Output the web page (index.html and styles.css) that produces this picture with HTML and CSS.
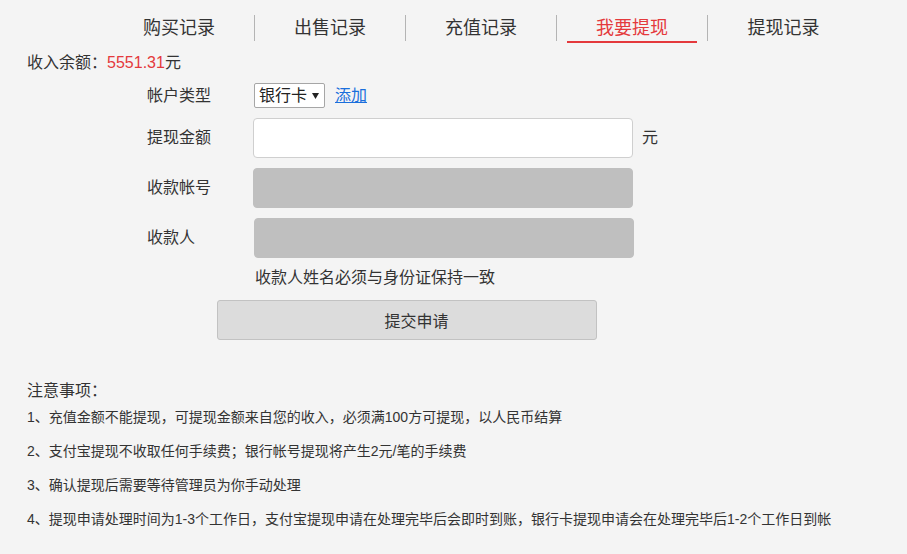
FILE: index.html
```html
<!DOCTYPE html>
<html lang="zh-CN">
<head>
<meta charset="utf-8">
<title>我要提现</title>
<link rel="stylesheet" href="styles.css">
</head>
<body>
<div class="page">
  <nav class="tabs">
    <a class="tab"><span class="tab-label">购买记录</span></a>
    <a class="tab"><span class="tab-label">出售记录</span></a>
    <a class="tab"><span class="tab-label">充值记录</span></a>
    <a class="tab active"><span class="tab-label">我要提现</span></a>
    <a class="tab last"><span class="tab-label">提现记录</span></a>
  </nav>

  <div class="balance">收入余额<span class="punc">：</span><span class="amount">5551.31</span>元</div>

  <form class="form">
    <div class="row">
      <label class="label">帐户类型</label>
      <div class="select" role="combobox">
        <span>银行卡</span>
        <svg class="caret" width="7" height="6" viewBox="0 0 7 6"><path d="M0 0H7L3.5 6Z" fill="#222"/></svg>
      </div>
      <a class="add-link" href="#">添加</a>
    </div>
    <div class="row">
      <label class="label">提现金额</label>
      <input class="field" type="text">
      <span class="unit">元</span>
    </div>
    <div class="row">
      <label class="label">收款帐号</label>
      <div class="field disabled"></div>
    </div>
    <div class="row">
      <label class="label">收款人</label>
      <div class="field disabled shift"></div>
    </div>
    <div class="hint">收款人姓名必须与身份证保持一致</div>
    <button class="submit" type="button">提交申请</button>
  </form>

  <section class="notes">
    <h3 class="notes-title">注意事项<span class="punc">：</span></h3>
    <ul class="notes-list">
      <li>1、充值金额不能提现，可提现金额来自您的收入，必须满100方可提现，以人民币结算</li>
      <li>2、支付宝提现不收取任何手续费；银行帐号提现将产生2元/笔的手续费</li>
      <li>3、确认提现后需要等待管理员为你手动处理</li>
      <li>4、提现申请处理时间为1-3个工作日，支付宝提现申请在处理完毕后会即时到账，银行卡提现申请会在处理完毕后1-2个工作日到帐</li>
    </ul>
  </section>
</div>
</body>
</html>
```

FILE: styles.css
```css
* { box-sizing: border-box; }

html, body {
  margin: 0;
  background: #f4f4f4;
}

body {
  font-family: "Liberation Sans", "Noto Sans CJK SC", sans-serif;
  color: #333;
  text-spacing-trim: space-all;
}

.punc {
  font-family: "Noto Sans CJK TC", sans-serif;
}

.page {
  padding: 15px 0 0 27px;
}

.tabs {
  display: flex;
  margin-left: 77px;
  height: 26px;
}

.tab {
  width: 151px;
  height: 26px;
  border-right: 1px solid #b4b4b4;
  font-size: 18px;
  line-height: 26px;
  text-align: center;
  color: #333;
  text-decoration: none;
}

.tab.last { border-right: none; }

.tab-label {
  display: block;
  width: 130px;
  height: 26px;
  margin: 0 auto;
}

.tab.active .tab-label {
  color: #e4393c;
  box-shadow: 0 2px 0 #e4393c;
}

.balance {
  margin-top: 8px;
  height: 24px;
  font-size: 16px;
  line-height: 24px;
}

.amount { color: #e4393c; }

.form {
  margin: 10px 0 0 0;
}

.row {
  display: flex;
  align-items: center;
  padding-left: 120px;
  margin-bottom: 10px;
}

.label {
  width: 106px;
  flex: none;
  font-size: 16px;
  line-height: 24px;
}

.select {
  display: flex;
  align-items: center;
  width: 71px;
  height: 25px;
  margin-left: 1px;
  padding: 0 0 0 4px;
  border: 1px solid #a6a6a6;
  border-radius: 2px;
  background: #fff;
  font-size: 16px;
  line-height: 23px;
  color: #222;
}

.caret {
  margin-left: 5px;
  margin-top: 1px;
}

.add-link {
  margin-left: 10px;
  font-size: 16px;
  line-height: 24px;
  color: #1a6fdc;
  text-decoration: underline;
}

.field {
  width: 380px;
  height: 40px;
  border: 1px solid #cfcfcf;
  border-radius: 4px;
  background: #fff;
  margin: 0;
  padding: 0 8px;
  font-size: 16px;
  font-family: inherit;
}

.field.disabled {
  background: #bfbfbf;
  border-color: #bfbfbf;
}

.field.shift { margin-left: 1px; }

.unit {
  margin-left: 9px;
  font-size: 16px;
  line-height: 24px;
}

.hint {
  margin: 0 0 0 228px;
  font-size: 16px;
  line-height: 20px;
}

.submit {
  display: block;
  margin: 12px 0 0 190px;
  width: 380px;
  height: 40px;
  background: #dcdcdc;
  border: 1px solid #c2c2c2;
  border-radius: 3px;
  font-family: inherit;
  font-size: 16px;
  color: #333;
  padding: 0 0 0 19px;
}

.notes {
  margin-top: 38px;
}

.notes-title {
  margin: 0;
  height: 22px;
  font-size: 16px;
  font-weight: normal;
  line-height: 22px;
}

.notes-list {
  margin: 0;
  padding: 0;
  list-style: none;
}

.notes-list li {
  font-size: 14px;
  line-height: 34px;
  white-space: nowrap;
}
```
